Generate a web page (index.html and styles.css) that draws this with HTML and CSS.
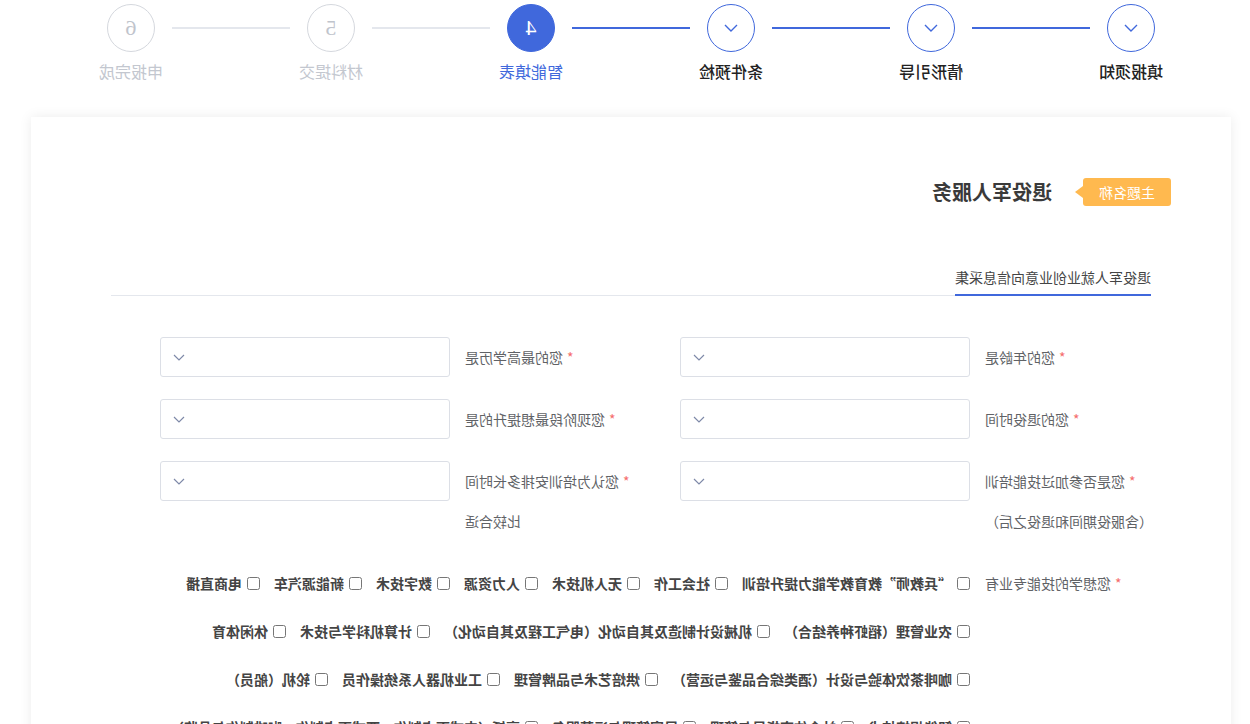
FILE: index.html
```html
<!DOCTYPE html>
<html lang="zh-CN">
<head>
    <meta charset="UTF-8">
    <meta name="viewport" content="width=device-width, initial-scale=1.0">
    <title>智能填表 - 退役军人服务</title>
    <link rel="stylesheet" href="styles.css">
</head>
<body>
    <div class="page">
        <div class="steps">
            <div class="step done">
                <div class="step-top">
                    <span class="seg"></span>
                    <span class="circle"><svg width="14" height="8" viewBox="0 0 14 8"><polyline points="1,1 7,7 13,1" fill="none" stroke="#4068dc" stroke-width="1.4"/></svg></span>
                    <span class="seg"></span>
                </div>
                <div class="step-label">填报须知</div>
            </div>
            <div class="step done">
                <div class="step-top">
                    <span class="seg"></span>
                    <span class="circle"><svg width="14" height="8" viewBox="0 0 14 8"><polyline points="1,1 7,7 13,1" fill="none" stroke="#4068dc" stroke-width="1.4"/></svg></span>
                    <span class="seg"></span>
                </div>
                <div class="step-label">情形引导</div>
            </div>
            <div class="step done">
                <div class="step-top">
                    <span class="seg"></span>
                    <span class="circle"><svg width="14" height="8" viewBox="0 0 14 8"><polyline points="1,1 7,7 13,1" fill="none" stroke="#4068dc" stroke-width="1.4"/></svg></span>
                    <span class="seg"></span>
                </div>
                <div class="step-label">条件预检</div>
            </div>
            <div class="step active">
                <div class="step-top">
                    <span class="seg"></span>
                    <span class="circle">4</span>
                    <span class="seg"></span>
                </div>
                <div class="step-label">智能填表</div>
            </div>
            <div class="step">
                <div class="step-top">
                    <span class="seg"></span>
                    <span class="circle">5</span>
                    <span class="seg"></span>
                </div>
                <div class="step-label">材料提交</div>
            </div>
            <div class="step">
                <div class="step-top">
                    <span class="seg"></span>
                    <span class="circle">6</span>
                    <span class="seg"></span>
                </div>
                <div class="step-label">申报完成</div>
            </div>
        </div>

        <div class="card">
            <div class="theme">
                <span class="theme-tag">主题名称</span>
                <h1 class="theme-title">退役军人服务</h1>
            </div>

            <div class="tabs">
                <span class="tab active">退役军人就业创业意向信息采集</span>
            </div>

            <div class="form">
                <div class="form-row">
                    <div class="field">
                        <label class="field-label"><i class="req">*</i>您的年龄是</label>
                        <div class="select"><svg width="12" height="7" viewBox="0 0 12 7"><polyline points="1,1 6,6 11,1" fill="none" stroke="#7e89a8" stroke-width="1.2"/></svg></div>
                    </div>
                    <div class="field">
                        <label class="field-label"><i class="req">*</i>您的最高学历是</label>
                        <div class="select"><svg width="12" height="7" viewBox="0 0 12 7"><polyline points="1,1 6,6 11,1" fill="none" stroke="#7e89a8" stroke-width="1.2"/></svg></div>
                    </div>
                </div>
                <div class="form-row">
                    <div class="field">
                        <label class="field-label"><i class="req">*</i>您的退役时间</label>
                        <div class="select"><svg width="12" height="7" viewBox="0 0 12 7"><polyline points="1,1 6,6 11,1" fill="none" stroke="#7e89a8" stroke-width="1.2"/></svg></div>
                    </div>
                    <div class="field">
                        <label class="field-label"><i class="req">*</i>您现阶段最想提升的是</label>
                        <div class="select"><svg width="12" height="7" viewBox="0 0 12 7"><polyline points="1,1 6,6 11,1" fill="none" stroke="#7e89a8" stroke-width="1.2"/></svg></div>
                    </div>
                </div>
                <div class="form-row">
                    <div class="field">
                        <label class="field-label"><i class="req">*</i>您是否参加过技能培训（含服役期间和退役之后）</label>
                        <div class="select"><svg width="12" height="7" viewBox="0 0 12 7"><polyline points="1,1 6,6 11,1" fill="none" stroke="#7e89a8" stroke-width="1.2"/></svg></div>
                    </div>
                    <div class="field">
                        <label class="field-label"><i class="req">*</i>您认为培训安排多长时间比较合适</label>
                        <div class="select"><svg width="12" height="7" viewBox="0 0 12 7"><polyline points="1,1 6,6 11,1" fill="none" stroke="#7e89a8" stroke-width="1.2"/></svg></div>
                    </div>
                </div>
                <div class="form-row">
                    <div class="field">
                        <label class="field-label"><i class="req">*</i>您想学的技能专业有</label>
                        <div class="checks">
                            <label class="check"><input type="checkbox">“兵教师”教育教学能力提升培训</label>
                            <label class="check"><input type="checkbox">社会工作</label>
                            <label class="check"><input type="checkbox">无人机技术</label>
                            <label class="check"><input type="checkbox">人力资源</label>
                            <label class="check"><input type="checkbox">数字技术</label>
                            <label class="check"><input type="checkbox">新能源汽车</label>
                            <label class="check"><input type="checkbox">电商直播</label>
                            <label class="check"><input type="checkbox">农业管理（稻虾种养结合）</label>
                            <label class="check"><input type="checkbox">机械设计制造及其自动化（电气工程及其自动化）</label>
                            <label class="check"><input type="checkbox">计算机科学与技术</label>
                            <label class="check"><input type="checkbox">休闲体育</label>
                            <label class="check"><input type="checkbox">咖啡茶饮体验与设计（酒类综合品鉴与运营）</label>
                            <label class="check"><input type="checkbox">烘焙艺术与品牌管理</label>
                            <label class="check"><input type="checkbox">工业机器人系统操作员</label>
                            <label class="check"><input type="checkbox">轮机（船员）</label>
                            <label class="check"><input type="checkbox">智能焊接技术</label>
                            <label class="check"><input type="checkbox">社会体育指导与管理</label>
                            <label class="check"><input type="checkbox">民宿管理与运营服务</label>
                            <label class="check"><input type="checkbox">烹饪（中式面点制作、西式面点制作、咖啡制作与品鉴）</label>
                        </div>
                    </div>
                </div>
            </div>
        </div>
    </div>
</body>
</html>
```

FILE: styles.css
```css
* {
    margin: 0;
    padding: 0;
    box-sizing: border-box;
}

html {
    overflow: hidden;
    background: #fff;
}

/* the whole screen is shown mirrored */
body {
    width: 1250px;
    font-family: "Noto Sans CJK SC", "Noto Sans", sans-serif;
    font-size: 14px;
    color: #333;
    background: #fff;
    transform: scaleX(-1);
}

.page {
    width: 1200px;
    margin-left: 19px;
}

/* steps */
.steps {
    display: flex;
    padding-top: 4px;
}

.step {
    flex: 1;
    display: flex;
    flex-direction: column;
    align-items: center;
}

.step-top {
    display: flex;
    align-items: center;
    width: 100%;
}

.seg {
    flex: 1;
    height: 2px;
    background: #e4e7ed;
}

.step:first-child .seg:first-child,
.step:last-child .seg:last-child {
    visibility: hidden;
}

.circle {
    width: 48px;
    height: 48px;
    margin: 0 17px;
    border: 1px solid #d5d8de;
    border-radius: 50%;
    display: flex;
    align-items: center;
    justify-content: center;
    color: #c0c4cc;
    font: 22px "Liberation Serif", serif;
}

.done .seg,
.active .seg:first-child {
    background: #4068dc;
}

.done .circle {
    border-color: #4068dc;
}

.active .circle {
    background: #4068dc;
    border-color: #4068dc;
    color: #fff;
}

.step-label {
    margin-top: 8px;
    font-size: 16px;
    line-height: 22px;
    color: #c3c7cf;
}

.done .step-label {
    color: #222;
    font-weight: 500;
}

.active .step-label {
    color: #4068dc;
}

/* card */
.card {
    margin-top: 35px;
    min-height: 700px;
    background: #fff;
    box-shadow: 0 0 12px rgba(0, 0, 0, 0.08);
    padding-bottom: 40px;
}

.theme {
    display: flex;
    align-items: center;
    padding: 61px 60px 0;
}

.theme-tag {
    position: relative;
    height: 28px;
    line-height: 28px;
    padding: 0 16px;
    margin-right: 31px;
    background: #ffb94f;
    color: #fff;
    border-radius: 3px;
    font-size: 14px;
}

.theme-tag::after {
    content: "";
    position: absolute;
    left: 100%;
    top: 8px;
    border-left: 8px solid #ffb94f;
    border-top: 6px solid transparent;
    border-bottom: 6px solid transparent;
}

.theme-title {
    font-size: 20px;
    line-height: 28px;
    font-weight: 700;
    color: #3a3a3a;
}

.tabs {
    margin: 61px 80px 0;
    border-bottom: 1px solid #e4e7ed;
}

.tab {
    display: inline-block;
    font-size: 14px;
    line-height: 20px;
    padding-bottom: 7px;
    margin-bottom: -1px;
    color: #444;
}

.tab.active {
    border-bottom: 2px solid #4068dc;
}

/* form */
.form {
    padding: 41px 0 0 76px;
}

.form-row {
    display: flex;
    gap: 45px;
    margin-bottom: 22px;
}

.field {
    display: flex;
    align-items: flex-start;
}

.field-label {
    width: 185px;
    padding-right: 15px;
    text-align: right;
    line-height: 40px;
    color: #606266;
}

.req {
    font-style: normal;
    color: #f56c6c;
    margin-right: 4px;
}

.select {
    width: 290px;
    height: 40px;
    border: 1px solid #dcdfe6;
    border-radius: 3px;
    display: flex;
    align-items: center;
    justify-content: flex-end;
    padding-right: 12px;
}

.checks {
    width: 810px;
    display: flex;
    flex-wrap: wrap;
    column-gap: 14px;
    row-gap: 8px;
}

.check {
    display: inline-flex;
    align-items: center;
    line-height: 40px;
    font-weight: 600;
    color: #444;
}

.check input {
    width: 13px;
    height: 13px;
    margin: 0 5px 0 0;
}
```
